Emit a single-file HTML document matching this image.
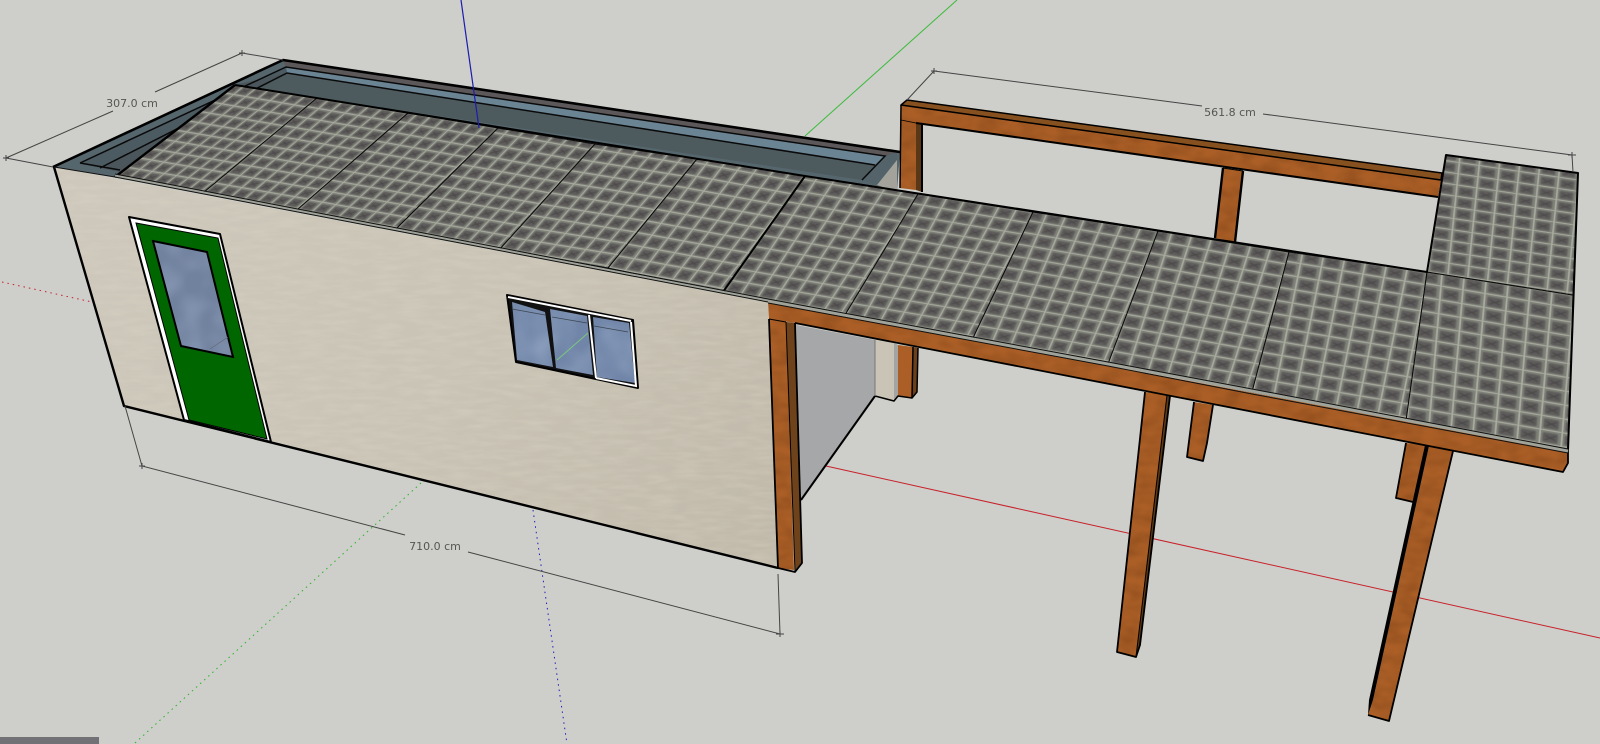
<!DOCTYPE html>
<html lang="en">
<head>
<meta charset="utf-8">
<title>Model</title>
<style>
html,body{margin:0;padding:0;width:1600px;height:744px;overflow:hidden;background:#cecfca}
svg{position:absolute;left:0;top:0;display:block}
text{font-family:"DejaVu Sans","Liberation Sans",sans-serif;font-size:11px;fill:#555;text-anchor:middle}
</style>
</head>
<body>
<svg width="1600" height="744" viewBox="0 0 1600 744" xmlns="http://www.w3.org/2000/svg">
<defs>
<filter id="soft" x="-20%" y="-20%" width="140%" height="140%"><feGaussianBlur stdDeviation=".8"/></filter>
<pattern id="t" width="20" height="20" patternUnits="userSpaceOnUse">
<rect width="20" height="20" fill="#7f8279"/>
<rect x="3.5" y="3.5" width="14" height="14" rx="2" fill="#5f5d5b" filter="url(#soft)"/>
<path d="M6 7L15 14M6 13L15 8" stroke="#494746" stroke-width="1.6" fill="none" filter="url(#soft)"/>
<path d="M0 1H20M1 0V20" stroke="#a9ab9f" stroke-width="1.6" fill="none"/>
</pattern>
<pattern id="p1" href="#t" patternTransform="matrix(.607 .104 .585 -.468 115 177)"/>
<pattern id="p2" href="#t" patternTransform="matrix(.661 .114 .562 -.48 203 193)"/>
<pattern id="p3" href="#t" patternTransform="matrix(.675 .121 .532 -.495 297 210)"/>
<pattern id="p4" href="#t" patternTransform="matrix(.718 .129 .515 -.538 396 229)"/>
<pattern id="p5" href="#t" patternTransform="matrix(.75 .121 .481 -.559 500 249)"/>
<pattern id="p6" href="#t" patternTransform="matrix(.796 .146 .447 -.588 608 268)"/>
<pattern id="p7" href="#t" patternTransform="matrix(.839 .146 .37 -.566 723 292)"/>
<pattern id="p8" href="#t" patternTransform="matrix(.868 .146 .302 -.561 845 315)"/>
<pattern id="p9" href="#t" patternTransform="matrix(.929 .161 .25 -.589 973 338)"/>
<pattern id="p10" href="#t" patternTransform="matrix(.982 .175 .198 -.62 1108 364)"/>
<pattern id="p11" href="#t" patternTransform="matrix(1.043 .175 .132 -.657 1252 392)"/>
<pattern id="p12" href="#t" patternTransform="matrix(1.1 .186 .059 -.691 1406 421)"/>
<pattern id="p13" href="#t" patternTransform="matrix(.993 .146 .057 -.56 1427 272)"/>
<linearGradient id="wallg" gradientUnits="userSpaceOnUse" x1="100" y1="180" x2="760" y2="560">
<stop offset="0" stop-color="#cec8bc"/><stop offset=".5" stop-color="#cac4b6"/><stop offset="1" stop-color="#c1baab"/>
</linearGradient>
<filter id="grain" x="0" y="0" width="100%" height="100%" color-interpolation-filters="sRGB">
<feTurbulence type="fractalNoise" baseFrequency=".05 .09" numOctaves="2" seed="3" result="n"/>
<feColorMatrix in="n" type="matrix" values="0 0 0 0 .35  0 0 0 0 .16  0 0 0 0 .02  .45 0 0 0 -.14" result="c"/>
<feComposite in="c" in2="SourceAlpha" operator="in" result="d"/>
<feMerge><feMergeNode in="SourceGraphic"/><feMergeNode in="d"/></feMerge>
</filter>
<filter id="streak" x="0" y="0" width="100%" height="100%" color-interpolation-filters="sRGB">
<feTurbulence type="fractalNoise" baseFrequency=".04 .2" numOctaves="2" seed="8" result="n"/>
<feColorMatrix in="n" type="matrix" values="0 0 0 0 .88  0 0 0 0 .86  0 0 0 0 .8  .5 0 0 0 -.17" result="c"/>
<feComposite in="c" in2="SourceAlpha" operator="in" result="d"/>
<feMerge><feMergeNode in="SourceGraphic"/><feMergeNode in="d"/></feMerge>
</filter>
<filter id="cloud" x="0" y="0" width="100%" height="100%" color-interpolation-filters="sRGB">
<feTurbulence type="fractalNoise" baseFrequency=".03" numOctaves="2" seed="5" result="n"/>
<feColorMatrix in="n" type="matrix" values="0 0 0 0 .68  0 0 0 0 .74  0 0 0 0 .84  .8 0 0 0 -.28" result="c"/>
<feComposite in="c" in2="SourceAlpha" operator="in" result="d"/>
<feMerge><feMergeNode in="SourceGraphic"/><feMergeNode in="d"/></feMerge>
</filter>
</defs>

<rect width="1600" height="744" fill="#cecfca"/>

<!-- axes -->
<g fill="none" stroke-width="1">
<path d="M957 0L805 136" stroke="#3cbb3c"/>
<path d="M421 483L135 743" stroke="#2ab32a" stroke-dasharray="1.5 4"/>
<path d="M2 282L92 302" stroke="#c8202a" stroke-dasharray="1.5 4"/>
<path d="M826 466L1600 638" stroke="#c8202a"/>
<path d="M533 510L567 744" stroke="#1c1cc0" stroke-dasharray="1.5 4"/>
</g>

<!-- gutter / roof recess -->
<polygon points="53,167 283,60 900,152 897,192 768,302 115,177" fill="#56666d"/>
<polygon points="286,67 283,60 897,152 885,156" fill="#5c5859"/>
<polygon points="286,67 885,156 875,165 287,73" fill="#6a8493"/>
<polygon points="287,73 875,165 862,180 235,85" fill="#4d5a5e"/>
<polygon points="286,67 287,73 100,168 80,163" fill="#4c5a61"/>
<polygon points="287,73 235,85 120,172 100,168" fill="#4a565b"/>
<polygon points="885,156 897,152 897,160 877,185 862,180 875,165" fill="#536369"/>
<polygon points="877,185 897,160 897,192" fill="#a3a39b"/>
<path d="M53 167L283 60L900 152" fill="none" stroke="#000" stroke-width="2.6" stroke-linejoin="round"/>
<g fill="none" stroke="#0a0a0a" stroke-width="1.5">
<path d="M80 163L286 67L885 156L862 180"/>
<path d="M100 168L287 73L875 165"/>
<path d="M80 163L120 170"/>
</g>

<!-- back beam and posts -->
<g filter="url(#grain)">
<polygon points="901,105 1441,180 1438,197 916,123 916,190 900,188" fill="#ab5f27"/>
<polygon points="1223,168 1243,171 1235,242 1215,238" fill="#ab5f27"/>
</g>
<polygon points="901,105 907,100 1442,173 1441,180" fill="#87501f" stroke="#000" stroke-width="1.5" stroke-linejoin="round"/>
<polygon points="916,123 922,123 922,192 916,190" fill="#5a3716"/>
<g fill="none" stroke="#000" stroke-linejoin="round">
<path d="M901 105L1441 180" stroke-width="1"/>
<path d="M901 105L900 188" stroke-width="1.5"/>
<path d="M916 123L1438 197" stroke-width="2"/>
<path d="M922 123L922 192" stroke-width="2"/>
<path d="M901 120L916 123" stroke-width=".8"/>
<path d="M1223 168L1215 238M1243 171L1235 242" stroke-width="2.4"/>
<path d="M1223 168L1243 171" stroke-width="1"/>
</g>

<!-- inner wall behind front post -->
<polygon points="796,325 875,340 875,396 801,500" fill="#a6a7a9"/>
<polygon points="875,340 894,343 894,401 875,396" fill="#cac4b6"/>
<polygon points="894,343 898,345 898,396 894,401" fill="#a4a5a3"/>
<polygon points="898,345 913,347 912,398 898,396" fill="#ab5f27"/>
<polygon points="913,347 918,348 917,392 912,398" fill="#6b401a"/>
<g fill="none" stroke="#000" stroke-width="1.5" stroke-linejoin="round">
<path d="M875 396L801 500" stroke-width="2"/>
<path d="M875 396L894 401L898 396L912 398L917 392L918 348"/>
<path d="M913 347L912 398"/>
</g>
<path d="M875 340V396" stroke="#777" fill="none"/>

<!-- front posts -->
<g filter="url(#grain)">
<polygon points="1194,402 1213,405 1203,461 1187,457" fill="#ab5f27"/>
<polygon points="1145,392 1167,395 1136,657 1117,652" fill="#ab5f27"/>
<polygon points="1406,443 1425,445 1413,502 1396,498" fill="#ab5f27"/>
<polygon points="1429,446 1453,451 1389,721 1368,715 1373,700" fill="#ab5f27"/>
</g>
<polygon points="1167,395 1170,396 1140,645 1136,657" fill="#5e3915"/>
<polygon points="1213,405 1207,443 1203,461" fill="#5e3915"/>
<polygon points="1425,445 1429,446 1373,700 1368,715 1369,700" fill="#000"/>
<g fill="none" stroke="#000" stroke-linejoin="round" stroke-width="1.8">
<path d="M1145 392L1117 652L1136 657L1140 645L1170 396"/>
<path d="M1167 395L1136 657" stroke-width="1"/>
<path d="M1194 402L1187 457L1203 461L1207 443L1213 405"/>
<path d="M1406 443L1396 498L1413 502"/>
<path d="M1453 451L1389 721L1368 715"/>
</g>

<!-- eave beam -->
<polygon points="768,302 1568,452 1568,463 1563,472 795,323 769,319" fill="#ab5f27" filter="url(#grain)"/>
<path d="M795 323L1563 472L1568 463V450" fill="none" stroke="#000" stroke-width="1.8" stroke-linejoin="round"/>

<!-- roof panels -->
<g stroke="#0c0c0c" stroke-width="1" stroke-linejoin="round">
<polygon fill="url(#p1)" points="115,177 203,193 317,98 235,85"/>
<polygon fill="url(#p2)" points="203,193 297,210 408,113 317,98"/>
<polygon fill="url(#p3)" points="297,210 396,229 498,128 408,113"/>
<polygon fill="url(#p4)" points="396,229 500,249 595,144 498,128"/>
<polygon fill="url(#p5)" points="500,249 608,268 697,159 595,144"/>
<polygon fill="url(#p6)" points="608,268 723,292 805,176 697,159"/>
<polygon fill="url(#p7)" points="723,292 845,315 918,194 805,176"/>
<polygon fill="url(#p8)" points="845,315 973,338 1033,212 918,194"/>
<polygon fill="url(#p9)" points="973,338 1108,364 1158,231 1033,212"/>
<polygon fill="url(#p10)" points="1108,364 1252,392 1289,252 1158,231"/>
<polygon fill="url(#p11)" points="1252,392 1406,421 1427,272 1289,252"/>
<polygon fill="url(#p12)" points="1406,421 1568,450 1573,295 1427,272"/>
<polygon fill="url(#p13)" points="1427,272 1573,295 1578,173 1446,155"/>
</g>
<g fill="none" stroke-linejoin="round">
<path d="M723 292L805 176" stroke="#000" stroke-width="2"/>
<path d="M115 177L235 85" stroke="#000" stroke-width="2.4"/>
<path d="M235 85L805 176L1427 272L1446 155L1578 173L1568 450" stroke="#000" stroke-width="2"/>
<path d="M115 177L768 302L1108 365L1252 392L1568 452" stroke="#9fa39a" stroke-width="3" transform="translate(0 -1)"/>
<path d="M115 174L768 299L1108 362L1252 389L1568 449" stroke="#111" stroke-width="1"/>
<path d="M768 303L1108 366L1252 394L1568 453" stroke="#111" stroke-width="1"/>
</g>

<!-- wall -->
<polygon points="54,167 768,302 778,568 124,406" fill="url(#wallg)" filter="url(#streak)"/>
<path d="M54 167L124 406L778 568" fill="none" stroke="#000" stroke-width="2.4" stroke-linejoin="round"/>
<path d="M54 167L115 177L768 302" fill="none" stroke="#111" stroke-width="1"/>

<!-- corner post -->
<polygon points="769,319 786,322 794,570 778,568" fill="#ab5f27" filter="url(#grain)"/>
<polygon points="786,322 795,323 802,563 795,572" fill="#6e421b"/>
<g fill="none" stroke="#000" stroke-linejoin="round">
<path d="M769 319L778 568L795 572L802 563L795 323" stroke-width="1.8"/>
<path d="M786 322L795 572" stroke-width="1"/>
<path d="M769 319L786 322" stroke-width="1"/>
</g>

<!-- door -->
<polygon points="129,217 220,234 271,442 184,420" fill="#fff" stroke="#000" stroke-width="2" stroke-linejoin="round"/>
<polygon points="136,223 218,238 267,439 189,420" fill="#006600" stroke="#000" stroke-width="1"/>
<polygon points="153,241 207,252 233,357 181,346" fill="#71829f" stroke="none" filter="url(#cloud)"/>
<polygon points="153,241 207,252 233,357 181,346" fill="none" stroke="#000" stroke-width="2"/>
<path d="M210 349L228 337" stroke="#667" stroke-width=".7" fill="none"/>

<!-- window -->
<polygon points="507,295 633,320 638,388 516,362" fill="#111" stroke="#000" stroke-width="2" stroke-linejoin="round"/>
<g filter="url(#cloud)">
<polygon points="512,302 545,312 553,367 517,360" fill="#7085a8"/>
<polygon points="550,309 587,316 593,375 556,368" fill="#7085a8"/>
<polygon points="593,317 629,323 635,383 597,377" fill="#7085a8"/>
</g>
<g fill="none">
<path d="M508 297L631 321M589 315L596 378M631 322L636 386L596 378" stroke="#fff" stroke-width="2"/>
<path d="M512 309L545 315M552 317L587 323M594 326L628 332" stroke="#3c4650" stroke-width=".8"/>
<path d="M557 360L588 333" stroke="#7bc77b" stroke-width="1"/>
</g>

<!-- blue axis (above model) -->
<path d="M461 0L479 128" stroke="#1c1cb0" stroke-width="1.2" fill="none"/>

<!-- dimensions -->
<g fill="none" stroke="#444" stroke-width="1">
<path d="M6 158L113 111M155 92L242 53M6 158L53 167M242 53L283 60"/>
<path d="M3 158H9M6 155V161M239 53H245M242 50V56"/>
<path d="M125 406L142 466L405 535M468 552L780 634L778 574"/>
<path d="M139 466H145M142 463V469M776 634H784M780 631V637"/>
<path d="M934 71L1202 106M1263 114L1572 155L1573 172M934 71L907 100"/>
<path d="M931 71H937M934 68V74M1568 155H1576M1572 152V158"/>
</g>
<text x="132" y="107">307.0 cm</text>
<text x="435" y="550">710.0 cm</text>
<text x="1230" y="116">561.8 cm</text>

<rect x="0" y="737" width="99" height="7" fill="#717176"/>
</svg>
</body>
</html>
